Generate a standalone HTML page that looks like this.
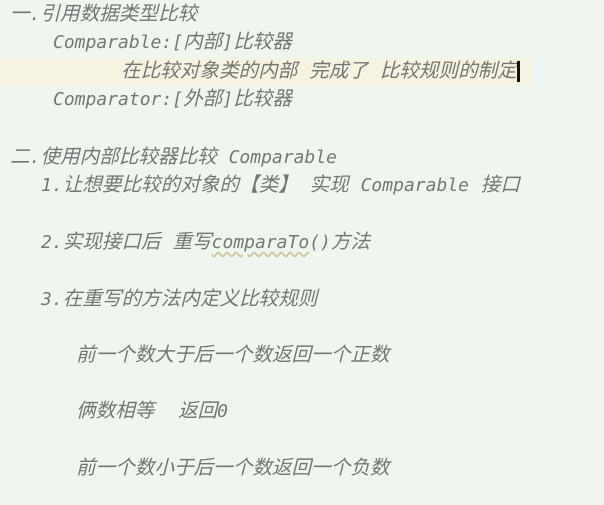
<!DOCTYPE html>
<html><head><meta charset="utf-8"><style>
html,body{margin:0;padding:0}
body{width:604px;height:505px;background:#eff6ef;position:relative;overflow:hidden;
font-family:"DejaVu Sans Mono","Noto Sans CJK SC",monospace;font-style:italic;color:#747774;font-size:19.6px}
.l{position:absolute;height:28px;line-height:28px;white-space:pre}
.m{font-size:18px}
.hl{position:absolute;left:0;top:58px;width:530px;height:28px;background:#f6f3e2}
.cur{display:inline-block;width:3px;height:21px;background:#111;vertical-align:middle;margin-left:0}
.u{text-decoration:underline wavy #c8c89a;text-underline-offset:3px}
</style></head><body>
<div class="hl"></div>
<div class="l" style="left:10px;top:0">一<span class="m">.</span>引用数据类型比较</div>
<div class="l" style="left:53px;top:28px"><span class="m">Comparable:[</span>内部<span class="m">]</span>比较器</div>
<div class="l" style="left:121px;top:57px">在比较对象类的内部 完成了 比较规则的制定<span class="cur"></span></div>
<div class="l" style="left:53px;top:85px"><span class="m">Comparator:[</span>外部<span class="m">]</span>比较器</div>
<div class="l" style="left:10px;top:143px">二<span class="m">.</span>使用内部比较器比较 <span class="m">Comparable</span></div>
<div class="l" style="left:41px;top:171px"><span class="m">1.</span>让想要比较的对象的【类】 实现 <span class="m">Comparable</span> 接口</div>
<div class="l" style="left:41px;top:228px"><span class="m">2.</span>实现接口后 重写<span class="m u">comparaTo</span><span class="m">()</span>方法</div>
<div class="l" style="left:41px;top:285px"><span class="m">3.</span>在重写的方法内定义比较规则</div>
<div class="l" style="left:76px;top:341px">前一个数大于后一个数返回一个正数</div>
<div class="l" style="left:76px;top:397px">俩数相等  返回<span class="m">0</span></div>
<div class="l" style="left:76px;top:454px">前一个数小于后一个数返回一个负数</div>
</body></html>
